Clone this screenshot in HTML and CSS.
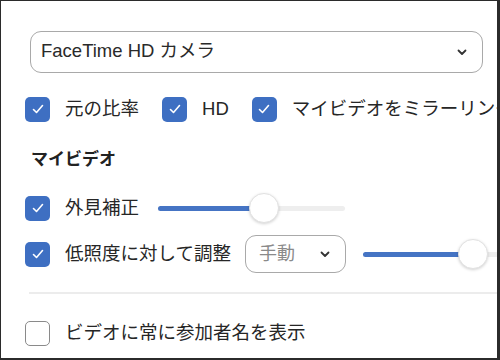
FILE: index.html
```html
<!DOCTYPE html>
<html lang="ja">
<head>
<meta charset="utf-8">
<link rel="stylesheet" href="styles.css">
</head>
<body>
<div class="frame">
  <div class="select camera">
    <span class="select-text">FaceTime HD カメラ</span>
    <svg class="chev" width="10" height="7" viewBox="0 0 10 7"><path d="M1.5 1.5 L5 5 L8.5 1.5" fill="none" stroke="#333" stroke-width="1.8" stroke-linecap="round" stroke-linejoin="round"/></svg>
  </div>

  <div class="row opts">
    <label class="item"><span class="cb on"><svg width="14" height="12" viewBox="0 0 14 12"><path d="M2.5 6.5 L5.5 9.5 L11.5 2.5" fill="none" stroke="#fff" stroke-width="1.6" stroke-linecap="round" stroke-linejoin="round"/></svg></span><span class="lbl">元の比率</span></label>
    <label class="item"><span class="cb on"><svg width="14" height="12" viewBox="0 0 14 12"><path d="M2.5 6.5 L5.5 9.5 L11.5 2.5" fill="none" stroke="#fff" stroke-width="1.6" stroke-linecap="round" stroke-linejoin="round"/></svg></span><span class="lbl">HD</span></label>
    <label class="item"><span class="cb on"><svg width="14" height="12" viewBox="0 0 14 12"><path d="M2.5 6.5 L5.5 9.5 L11.5 2.5" fill="none" stroke="#fff" stroke-width="1.6" stroke-linecap="round" stroke-linejoin="round"/></svg></span><span class="lbl">マイビデオをミラーリング</span></label>
  </div>

  <div class="heading">マイビデオ</div>

  <div class="row r1">
    <label class="item"><span class="cb on"><svg width="14" height="12" viewBox="0 0 14 12"><path d="M2.5 6.5 L5.5 9.5 L11.5 2.5" fill="none" stroke="#fff" stroke-width="1.6" stroke-linecap="round" stroke-linejoin="round"/></svg></span><span class="lbl">外見補正</span></label>
    <div class="slider s1">
      <div class="fill" style="width:94px"></div>
      <div class="thumb" style="left:91px"></div>
    </div>
  </div>

  <div class="row r2">
    <label class="item"><span class="cb on"><svg width="14" height="12" viewBox="0 0 14 12"><path d="M2.5 6.5 L5.5 9.5 L11.5 2.5" fill="none" stroke="#fff" stroke-width="1.6" stroke-linecap="round" stroke-linejoin="round"/></svg></span><span class="lbl">低照度に対して調整</span></label>
    <div class="select mode">
      <span class="mode-text">手動</span>
      <svg class="chev" width="10" height="7" viewBox="0 0 10 7"><path d="M1.5 1.5 L5 5 L8.5 1.5" fill="none" stroke="#333" stroke-width="1.8" stroke-linecap="round" stroke-linejoin="round"/></svg>
    </div>
    <div class="slider s2">
      <div class="fill" style="width:105px"></div>
      <div class="thumb" style="left:95px"></div>
    </div>
  </div>

  <div class="divider"></div>

  <div class="row r3">
    <label class="item"><span class="cb off"></span><span class="lbl">ビデオに常に参加者名を表示</span></label>
  </div>
</div>
</body>
</html>
```

FILE: styles.css
```css
html, body {
  margin: 0;
  padding: 0;
  background: #fff;
}
.frame {
  width: 500px;
  height: 360px;
  box-sizing: border-box;
  border-style: solid;
  border-color: #2b2b2b;
  border-width: 1px 3px 2px 1px;
  overflow: hidden;
  padding: 30px 0 0 24px;
  font-family: "Liberation Sans", "Noto Sans CJK JP", sans-serif;
  color: #222;
  font-size: 18px;
  white-space: nowrap;
}
.select {
  box-sizing: border-box;
  border: 1.5px solid #a9a9a9;
  border-radius: 11px;
  display: flex;
  align-items: center;
  justify-content: space-between;
  background: #fff;
}
.camera {
  margin-left: 5px;
  width: 453px;
  height: 42px;
  padding: 0 15px 0 10px;
}
.select-text {
  font-size: 18.5px;
  color: #2a2a2a;
  line-height: 1;
  position: relative;
  top: -1px;
}
.row {
  display: flex;
  align-items: center;
}
.opts {
  margin-top: 23px;
  height: 26px;
  gap: 23px;
}
.item {
  display: flex;
  align-items: center;
  gap: 15px;
}
.cb {
  box-sizing: border-box;
  width: 25px;
  height: 25px;
  border-radius: 5px;
  display: flex;
  align-items: center;
  justify-content: center;
  flex: none;
}
.cb.on {
  background: #3e6fc2;
}
.cb.off {
  border: 1.5px solid #8a8a8a;
  background: #fff;
}
.lbl {
  font-size: 18.5px;
  line-height: 1;
  color: #262626;
}
.heading {
  margin: 27px 0 0 6px;
  font-size: 17px;
  font-weight: bold;
  line-height: 22px;
  height: 22px;
  color: #222;
}
.r1 {
  margin-top: 23px;
  height: 28px;
}
.slider {
  position: relative;
  height: 5px;
  border-radius: 3px;
  background: #eeeeee;
}
.slider .fill {
  height: 100%;
  background: #4574c4;
  border-radius: 3px;
}
.slider .thumb {
  position: absolute;
  top: -13px;
  width: 30px;
  height: 30px;
  box-sizing: border-box;
  border-radius: 50%;
  background: #fff;
  border: 1px solid #e2e2e2;
  box-shadow: 0 1px 3px rgba(0, 0, 0, 0.18);
}
.s1 {
  margin-left: 19px;
  width: 187px;
}
.r2 {
  margin-top: 13px;
  height: 38px;
}
.mode {
  margin-left: 14px;
  width: 101px;
  height: 38px;
  padding: 0 15px 0 13px;
  flex: none;
}
.mode-text {
  font-size: 18px;
  color: #8a8a8a;
  line-height: 1;
}
.s2 {
  margin-left: 17px;
  width: 140px;
  flex: none;
}
.divider {
  margin: 19px 0 0 4px;
  height: 2px;
  background: #ececec;
}
.r3 {
  margin-top: 26px;
  height: 26px;
}
```
